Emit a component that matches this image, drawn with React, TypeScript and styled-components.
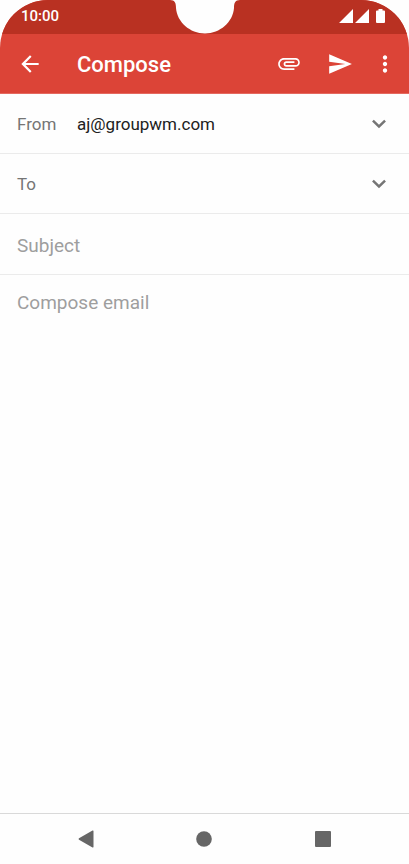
import React from "react";
import styled, { createGlobalStyle } from "styled-components";

const GlobalStyle = createGlobalStyle`
  * { box-sizing: border-box; }
  body {
    margin: 0;
    background: #fefefe;
    color: #212121;
    font-family: Roboto, "Liberation Sans", sans-serif;
  }
  button, input, select, textarea { font: inherit; }
`;

const Screen = styled.div`
  display: flex;
  flex-direction: column;
  min-height: 100vh;
`;

const Header = styled.header`
  position: relative;
  overflow: hidden;
  border-radius: 48px 48px 0 0;
  background: #dc4437;
  color: #fff;
`;

const StatusBar = styled.div`
  display: flex;
  align-items: center;
  justify-content: space-between;
  height: 34px;
  padding: 0 24px 3px 21px;
  background: #b93122;
  font-size: 15px;
  font-weight: 500;
`;

const Notch = styled.svg`
  position: absolute;
  top: 0;
  left: 50%;
  transform: translateX(-50%);
`;

const AppBar = styled.div`
  display: flex;
  align-items: center;
  height: 60px;
  padding: 0 10px;
  border-bottom: 1px solid #e5695f;
`;

const IconButton = styled.button<{ $width?: number }>`
  display: flex;
  align-items: center;
  justify-content: center;
  width: ${({ $width }) => $width ?? 40}px;
  height: 40px;
  padding: 0;
  border: 0;
  background: none;
  color: inherit;
  cursor: pointer;
`;

const Title = styled.h1`
  flex: 1;
  margin: 0 0 0 27px;
  padding-top: 2px;
  font-size: 22px;
  font-weight: 500;
  line-height: 28px;
`;

const Actions = styled.div`
  display: flex;
  gap: 11px;
`;

const Form = styled.form`
  display: flex;
  flex: 1;
  flex-direction: column;
`;

const Row = styled.div<{ $tall?: boolean }>`
  display: flex;
  align-items: center;
  height: ${({ $tall }) => ($tall ? 61 : 60)}px;
  padding: 0 10px 0 17px;
  border-bottom: 1px solid #ebebeb;
  color: #757575;
`;

const Label = styled.label`
  width: 60px;
  font-size: 17px;
`;

const Account = styled.select`
  flex: 1;
  min-width: 0;
  padding: 0;
  border: 0;
  outline: 0;
  appearance: none;
  background: none;
  color: #212121;
  font-size: 17px;
`;

const Field = styled.input<{ $large?: boolean }>`
  flex: 1;
  min-width: 0;
  padding: ${({ $large }) => ($large ? 2 : 0)}px 0 0;
  border: 0;
  outline: 0;
  background: none;
  color: #212121;
  font-size: ${({ $large }) => ($large ? 19 : 17)}px;
  &::placeholder { color: #9e9e9e; opacity: 1; }
`;

const Message = styled.textarea`
  flex: 1;
  padding: 16px 17px;
  border: 0;
  outline: 0;
  resize: none;
  background: none;
  color: #212121;
  font-size: 19px;
  line-height: 24px;
  &::placeholder { color: #9e9e9e; opacity: 1; }
`;

const NavBar = styled.nav`
  display: grid;
  grid-template-columns: repeat(3, 1fr);
  place-items: center;
  height: 51px;
  padding: 0 27px;
  border-top: 1px solid #d9d9d9;
  color: #666;
`;

const Icon = ({ d, size = 26 }: { d: string; size?: number }) => (
  <svg width={size} height={size} viewBox="0 0 24 24" fill="currentColor" aria-hidden="true">
    <path d={d} />
  </svg>
);

const paths = {
  back: "M20 11H7.83l5.59-5.59L12 4l-8 8 8 8 1.41-1.41L7.83 13H20v-2z",
  attach:
    "M2 12C2 8.960 4.460 6.500 7.500 6.500H18c2.210 0 4 1.790 4 4s-1.790 4-4 4H9.500C8.120 14.500 7 13.380 7 12S8.120 9.500 9.500 9.500H17V11H9.500c-1.200 0-1.200 2 0 2H18c1.380 0 2.500-1.120 2.500-2.500S19.380 8 18 8H7.500c-2.210 0-4 1.790-4 4s1.790 4 4 4H17V17.500H7.500C4.460 17.500 2 15.040 2 12z",
  send: "M2.01 21L23 12 2.01 3 2 10l15 2-15 2z",
  more: "M12 8c1.1 0 2-.9 2-2s-.9-2-2-2-2 .9-2 2 .9 2 2 2zm0 2c-1.1 0-2 .9-2 2s.9 2 2 2 2-.9 2-2-.9-2-2-2zm0 6c-1.1 0-2 .9-2 2s.9 2 2 2 2-.9 2-2-.9-2-2-2z",
  expand: "M16.8 8L12 12.700 7.200 8 5.600 9.600l6.400 6.400 6.400-6.400z",
};

export default function App() {
  return (
    <Screen>
      <GlobalStyle />
      <Header>
        <StatusBar>
          <span>10:00</span>
          <svg width="46" height="16" viewBox="0 0 46 16" fill="#fff" aria-hidden="true">
            <path d="M0 15L14 1V15zM16 15L30 1V15z" />
            <path d="M39.5 1h4v1.500H45q1 0 1 1V14q0 1-1 1h-7q-1 0-1-1V3.500q0-1 1-1h1.500z" />
          </svg>
        </StatusBar>
        <Notch width="70" height="34" viewBox="0 0 70 34" aria-hidden="true">
          <path
            d="M0 0C5 0 6 3 6 8C7 22 20 33.500 35 33.500C50 33.500 63 22 64 8C64 3 65 0 70 0z"
            fill="#fefefe"
          />
        </Notch>
        <AppBar>
          <IconButton type="button" aria-label="Back">
            <Icon d={paths.back} />
          </IconButton>
          <Title>Compose</Title>
          <Actions>
            <IconButton type="button" aria-label="Attach file">
              <Icon d={paths.attach} />
            </IconButton>
            <IconButton type="submit" form="compose" aria-label="Send">
              <Icon d={paths.send} />
            </IconButton>
            <IconButton type="button" aria-label="More options" $width={28}>
              <Icon d={paths.more} />
            </IconButton>
          </Actions>
        </AppBar>
      </Header>
      <Form id="compose" onSubmit={(event) => event.preventDefault()}>
        <Row>
          <Label htmlFor="from">From</Label>
          <Account id="from">
            <option>aj@groupwm.com</option>
          </Account>
          <IconButton as="span">
            <Icon d={paths.expand} />
          </IconButton>
        </Row>
        <Row>
          <Label htmlFor="to">To</Label>
          <Field id="to" type="email" />
          <IconButton type="button" aria-label="Show Cc and Bcc">
            <Icon d={paths.expand} />
          </IconButton>
        </Row>
        <Row $tall>
          <Field $large aria-label="Subject" placeholder="Subject" />
        </Row>
        <Message aria-label="Compose email" placeholder="Compose email" />
      </Form>
      <NavBar aria-label="System navigation">
        <IconButton type="button" aria-label="Previous screen">
          <svg width="16" height="18" viewBox="0 0 16 18" fill="currentColor">
            <path d="M1 8.300L14.500 .6Q15.500 0 15.500 1.200V16.800Q15.500 18 14.500 17.400L1 9.700Q0 9 1 8.300z" />
          </svg>
        </IconButton>
        <IconButton type="button" aria-label="Home">
          <svg width="16" height="16" viewBox="0 0 16 16" fill="currentColor">
            <circle cx="8" cy="8" r="7.800" />
          </svg>
        </IconButton>
        <IconButton type="button" aria-label="Recent apps">
          <svg width="16" height="16" viewBox="0 0 16 16" fill="currentColor">
            <rect width="16" height="16" rx="1" />
          </svg>
        </IconButton>
      </NavBar>
    </Screen>
  );
}
